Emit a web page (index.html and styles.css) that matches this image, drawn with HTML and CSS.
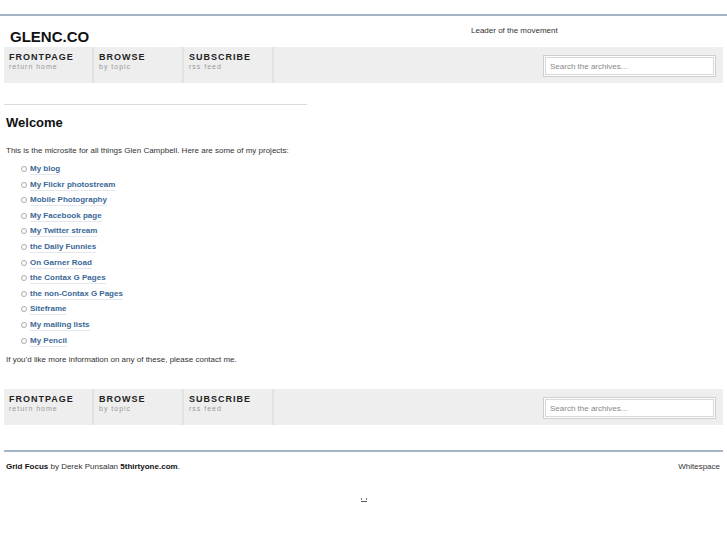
FILE: index.html
```html
<!DOCTYPE html>
<html>
<head>
<meta charset="utf-8">
<link rel="stylesheet" href="styles.css">
</head>
<body>
<div class="toprule"></div>
<div class="header">
  <h1 class="logo">GLENC.CO</h1>
  <div class="tagline">Leader of the movement</div>
</div>
<div class="nav">
  <a class="navitem" href="#"><span class="nt">FRONTPAGE</span><span class="ns">return home</span></a>
  <a class="navitem" href="#"><span class="nt">BROWSE</span><span class="ns">by topic</span></a>
  <a class="navitem" href="#"><span class="nt">SUBSCRIBE</span><span class="ns">rss feed</span></a>
  <div class="search"><div class="sbox">Search the archives...</div></div>
</div>
<div class="main">
  <div class="divider"></div>
  <h2 class="title">Welcome</h2>
  <p class="txt">This is the microsite for all things Glen Campbell. Here are some of my projects:</p>
  <ul class="list">
    <li><a href="#">My blog</a></li>
    <li><a href="#">My Flickr photostream</a></li>
    <li><a href="#">Mobile Photography</a></li>
    <li><a href="#">My Facebook page</a></li>
    <li><a href="#">My Twitter stream</a></li>
    <li><a href="#">the Daily Funnies</a></li>
    <li><a href="#">On Garner Road</a></li>
    <li><a href="#">the Contax G Pages</a></li>
    <li><a href="#">the non-Contax G Pages</a></li>
    <li><a href="#">Siteframe</a></li>
    <li><a href="#">My mailing lists</a></li>
    <li><a href="#">My Pencil</a></li>
  </ul>
  <p class="txt">If you’d like more information on any of these, please contact me.</p>
</div>
<div class="nav nav2">
  <a class="navitem" href="#"><span class="nt">FRONTPAGE</span><span class="ns">return home</span></a>
  <a class="navitem" href="#"><span class="nt">BROWSE</span><span class="ns">by topic</span></a>
  <a class="navitem" href="#"><span class="nt">SUBSCRIBE</span><span class="ns">rss feed</span></a>
  <div class="search"><div class="sbox">Search the archives...</div></div>
</div>
<div class="footer">
  <div class="credit"><b>Grid Focus</b> by Derek Punsalan <b>5thirtyone.com</b>.</div>
  <div class="ws">Whitespace</div>
</div>
<div class="stat"><svg width="6" height="5" viewBox="0 0 6 5"><rect x="0" y="0" width="1" height="2" fill="#777"/><rect x="5" y="0" width="1" height="2" fill="#777"/><rect x="0" y="3" width="6" height="1" fill="#555"/></svg></div>
</body>
</html>
```
FILE: styles.css
```css
* { box-sizing: border-box; }
body {
  margin: 0;
  font-family: "Liberation Sans", Arial, sans-serif;
  color: #222;
  background: #fff;
}
.toprule {
  margin-top: 14px;
  height: 2px;
  background: #a5b5c5;
}
.header {
  display: flex;
  align-items: flex-start;
  height: 31px;
  padding: 0 0 0 10px;
}
.logo {
  margin: 12px 0 0 0;
  font-size: 15px;
  font-weight: bold;
  color: #111;
  line-height: 17px;
  width: 461px;
}
.tagline {
  margin-top: 10px;
  font-size: 8px;
  color: #333;
  line-height: 10px;
}
.nav {
  display: flex;
  margin: 0 4px;
  height: 36px;
  background: #eeeeee;
}
.navitem {
  display: flex;
  flex-direction: column;
  width: 90px;
  border-right: 2px solid #e2e2e2;
  padding: 5px 0 0 5px;
  text-decoration: none;
}
.nt {
  font-size: 9px;
  font-weight: bold;
  letter-spacing: 1px;
  color: #222;
  line-height: 10px;
}
.ns {
  font-size: 7px;
  letter-spacing: 1px;
  color: #999;
  line-height: 9px;
}
.search {
  margin-left: auto;
  padding: 8px 7px 0 0;
}
.sbox {
  width: 173px;
  height: 22px;
  border: 1px solid #cfcfcf;
  box-shadow: inset 0 0 0 1px #fff, inset 0 0 0 2px #d8d8d8;
  background: #fff;
  font-size: 8px;
  color: #888;
  padding: 6px 0 0 6px;
  line-height: 10px;
}
.main {
  padding: 21px 6px 0 6px;
}
.divider {
  margin-left: -2px;
  width: 303px;
  height: 1px;
  background: #dcdcdc;
}
.title {
  margin: 10px 0 0 0;
  font-size: 13px;
  font-weight: bold;
  line-height: 16px;
  color: #111;
}
.txt {
  font-size: 8px;
  line-height: 10px;
  color: #333;
  margin: 15px 0 0 0;
}
.list {
  list-style: none;
  margin: 6px 0 0 0;
  padding-left: 24px;
  font-size: 8px;
  color: #666;
}
.list li {
  height: 15.6px;
  line-height: 14px;
  position: relative;
}
.list li::before {
  content: "";
  position: absolute;
  left: -9px;
  top: 4px;
  width: 4px;
  height: 4px;
  border: 1px solid #aaa;
  border-radius: 50%;
}
.list a {
  color: #3a6896;
  font-weight: bold;
  text-decoration: none;
  border-bottom: 1px solid #e4e8ec;
  padding-bottom: 1px;
}
.list + .txt { margin-top: 6px; }
.nav2 {
  margin-top: 24px;
}
.footer {
  display: flex;
  justify-content: space-between;
  margin: 25px 4px 0 4px;
  border-top: 2px solid #a5b5c5;
  padding: 10px 3px 0 2px;
  font-size: 8px;
  line-height: 10px;
  color: #333;
}
.footer b { color: #111; }
.stat {
  display: flex;
  justify-content: center;
  margin-top: 26px;
}
```
